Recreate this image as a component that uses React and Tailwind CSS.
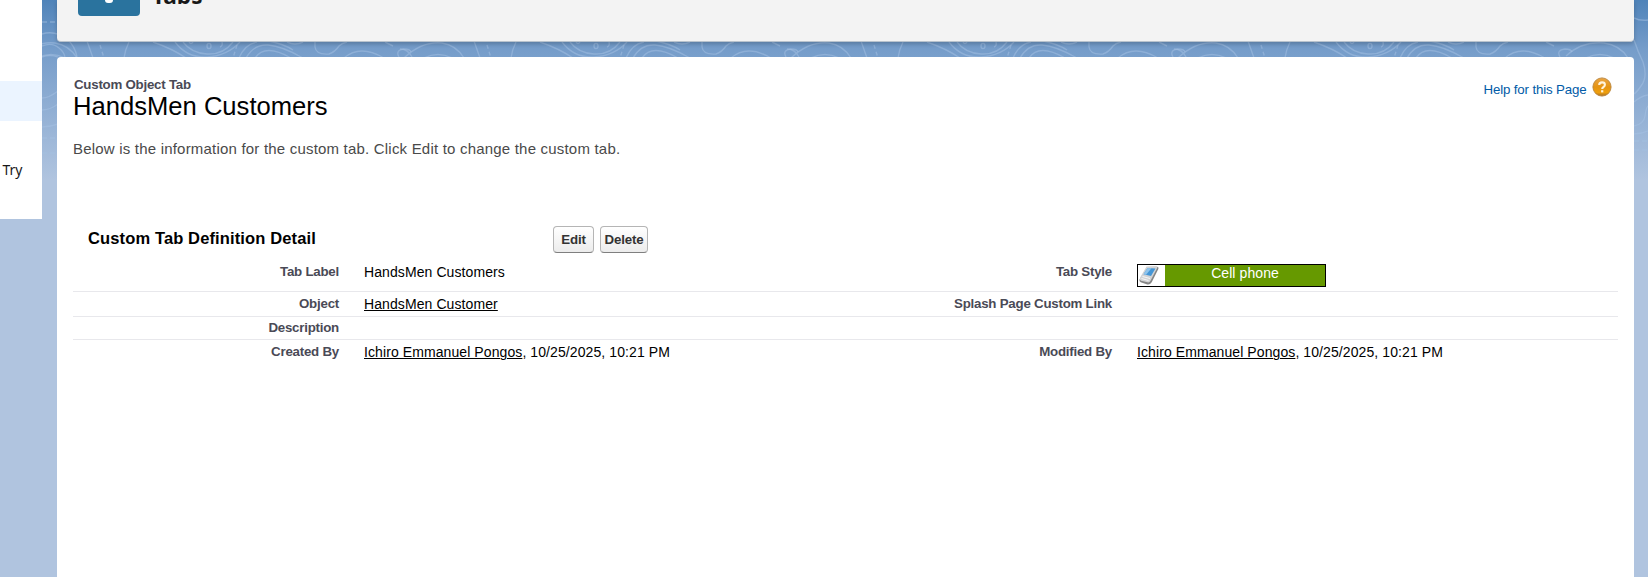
const ARIAL = "font-['Liberation_Sans',Arial,sans-serif]";

function Contours() {
  return (
    <svg className="absolute inset-0" width="1648" height="180" fill="none" stroke="#a6c2e4" strokeOpacity="0.5" strokeWidth="1.4">
      <defs>
        <g id="contour">
          <ellipse cx="0" cy="46" rx="2" ry="2.6" />
          <path d="M-20 42q2 3 4 0M11 47q3-1 2-5M-26 42q8 11 24 12T24 42M-34 42q12 16 32 15T31 42" />
          <path d="M-56 42q20 7 33 16M-80 42q-4 8-5 16M-122 41l6 17" />
          <path d="M-109 45l4 13M28 45l-4 13" strokeDasharray="4 3" />
          <path d="M-192 58q18-17 38-15q14 2 22 15M-172 58q14-7 28 0M-196 49q8 0 12 8" />
          <path d="M30 58q6-14 18-16M37 58q8-14 22-13t35 13M46 58q10-15 36 0M60 41q15 3 24 9" />
          <path d="M78 42q8 4 16 0M106 42v5q1 8 14 7q6-2 10-8q3-3 8-4M135 58q16-14 40 0M176 42l8 4M190 57q-4-7 5-8q6 0 7 3" />
        </g>
      </defs>
      <use href="#contour" x="209" />
      <use href="#contour" x="596" />
      <use href="#contour" x="983" />
      <use href="#contour" x="1370" />
      <path d="M1566 56q16-15 38-13q16 2 24 15M1586 58q14-7 28 0" />
      <path d="M42 34q13-4 25 5q8 7 10 18M42 46q10-4 17 2q5 4 6 9M42 57q8-3 16 0M42 98q7 0 16-7M42 110q8 0 16-6M42 127q8 0 16-3" />
      <path d="M42 22h16M42 138h16M42 153h16M1634 141h14M1634 150h14" strokeDasharray="5 3" />
      <path d="M1634 18q6 3 14 2M1634 40q4 12 9 22q5 15-2 24q-4 6-7 8M1634 102q7-6 14-7M1634 126q10-2 11-10t3-10M1634 134q7 0 14-3" />
    </svg>
  );
}

function HelpIcon() {
  return (
    <svg className="mt-px" width="20" height="20" viewBox="0 0 20 20">
      <defs>
        <linearGradient id="orange" x1="0" y1="0" x2="0" y2="1">
          <stop offset="0" stopColor="#e9a545" />
          <stop offset="0.5" stopColor="#e59413" />
          <stop offset="0.8" stopColor="#ef9f0b" />
          <stop offset="1" stopColor="#a8702a" />
        </linearGradient>
      </defs>
      <circle cx="10" cy="10" r="9.1" fill="url(#orange)" stroke="#b9853c" strokeWidth="0.9" />
      <path d="M7.2 8.1q0-2.700 2.900-2.700q2.800 0 2.800 2.400q0 1.400-1.400 2.200q-1.300.7-1.300 1.900" fill="none" stroke="#fff3dc" strokeWidth="2.1" />
      <rect x="9.1" y="13.200" width="2.200" height="2.200" fill="#fff3dc" />
    </svg>
  );
}

function PhoneIcon() {
  return (
    <svg width="27" height="21" viewBox="0 0 27 21">
      <path d="M9 2.500l10-.8q2.200.2 1.200 2.500l-6.500 13q-2 3-5 2l-6-2q-2-1-1-3z" fill="#858585" />
      <path d="M8.500 1.500l9.500-.5q2 .3 1 2.300l-6.500 12.500q-1 2-3 1.500l-6.500-1.500q-2-1-1-3z" fill="#d2d3d5" />
      <path d="M9.500 3l8 .4l-4.500 7.600l-7.500-1.800z" fill="#4596d6" />
      <path d="M9.500 3l4 .2l-5.500 6.600l-2.500-.6z" fill="#8fc4ec" />
      <path d="M4.500 11.500l7.500 2M3.500 13.500l7 2" stroke="#f6f6f6" />
    </svg>
  );
}

function Label({ children }) {
  return <div className="text-right text-[13.3px] leading-[16px] font-bold tracking-[-0.23px] text-[#4a4a56]">{children}</div>;
}

function Linked({ children }) {
  return <span className="underline decoration-1 underline-offset-1">{children}</span>;
}

function Person() {
  return (
    <>
      <Linked>Ichiro Emmanuel Pongos</Linked>, 10/25/2025, 10:21 PM
    </>
  );
}

function Row({ className, left, leftValue, right, rightValue }) {
  return (
    <div className={`grid grid-cols-[266px_25px_482px_266px_25px_1fr] border-[#e8e8ec] ${className}`}>
      <Label>{left}</Label>
      <span />
      <div className="text-[14px] leading-[17px] tracking-[0.09px] text-black">{leftValue}</div>
      <Label>{right}</Label>
      <span />
      <div className="text-[14px] leading-[17px] tracking-[0.09px] text-black">{rightValue}</div>
    </div>
  );
}

const BUTTON =
  "h-[27px] rounded-[4px] border border-[#b5b5b5] border-b-[#7f7f7f] bg-linear-to-b from-white to-[#ececec] text-[13.3px] leading-[25px] font-bold tracking-[-0.15px] text-[#333333]";

export default function App() {
  return (
    <div className={`relative flex h-[577px] w-[1648px] overflow-hidden bg-[#b0c4df] ${ARIAL}`}>
      <div className="absolute inset-x-0 top-0 h-[180px] bg-linear-to-b from-[#4f83b9] via-[#769dca] via-28% to-[#b0c4df]" />
      <Contours />
      <aside className="relative h-[219px] w-[42px] shrink-0 bg-white pt-[81px]">
        <div className="h-[40px] bg-[#ebf4ff]" />
        <div className="pt-[39px] pl-[2.5px] font-['Noto_Sans',sans-serif] text-[14px] leading-[20px] text-[#181818]">Try</div>
      </aside>
      <main className="relative ml-[15px] flex w-[1577px] shrink-0 flex-col">
        <header className="flex h-[42px] shrink-0 gap-[12px] rounded-b-[4px] border-b border-[#b9c3cd] bg-[#f3f3f3] pl-[21px] shadow-[0_2px_4px_rgba(0,0,0,0.2)]">
          <div className="flex h-[16px] w-[62px] justify-center rounded-b-[4px] bg-[#2a739e]">
            <div className="h-[3px] w-[8px] rounded-b-full bg-white" />
          </div>
          <div className="-mt-[16px] h-[24px] font-['Noto_Sans',sans-serif] text-[22.7px] leading-[24px] font-bold text-[#181818]">Tabs</div>
        </header>
        <section className="mt-[15px] h-[520px] rounded-t-[4px] bg-white px-4 pt-[19px]">
          <div className="flex h-[45px] justify-between">
            <div>
              <div className="pl-px text-[13.3px] leading-[17px] font-bold tracking-[-0.24px] text-[#4a4a56]">Custom Object Tab</div>
              <h1 className="-mt-px text-[25.6px] leading-[28px] text-black">HandsMen Customers</h1>
            </div>
            <div className="flex gap-[5px] pr-[6.5px]">
              <span className="pt-[5px] text-[13.3px] leading-[17px] tracking-[-0.15px] text-[#015ba7]">Help for this Page</span>
              <HelpIcon />
            </div>
          </div>
          <p className="mt-[18px] text-[15px] leading-[20px] tracking-[0.2px] text-[#4a4a4a]">
            Below is the information for the custom tab. Click Edit to change the custom tab.
          </p>
          <div className="mt-[67px] flex h-[27px]">
            <h2 className="w-[465px] pl-[15px] text-[16.5px] leading-[25px] font-bold tracking-[0.13px] text-black">Custom Tab Definition Detail</h2>
            <div className="ml-[15px] flex gap-[6px]">
              <button className={`${BUTTON} w-[41px]`}>Edit</button>
              <button className={`${BUTTON} w-[48px]`}>Delete</button>
            </div>
          </div>
          <div className="pt-[11px]">
            <Row
              className="h-[28px] border-b"
              left="Tab Label"
              leftValue="HandsMen Customers"
              right="Tab Style"
              rightValue={
                <div className="flex h-[23px] w-[189px] border border-black bg-[#669900]">
                  <div className="w-[27px] bg-white">
                    <PhoneIcon />
                  </div>
                  <div className="flex-1 text-center text-[14px] leading-[17px] tracking-[0.08px] text-white">Cell phone</div>
                </div>
              }
            />
            <Row className="h-[25px] border-b pt-[4px]" left="Object" leftValue={<Linked>HandsMen Customer</Linked>} right="Splash Page Custom Link" />
            <Row className="h-[23px] border-b pt-[3px]" left="Description" />
            <Row className="h-[30px] pt-[4px]" left="Created By" leftValue={<Person />} right="Modified By" rightValue={<Person />} />
          </div>
        </section>
      </main>
    </div>
  );
}
